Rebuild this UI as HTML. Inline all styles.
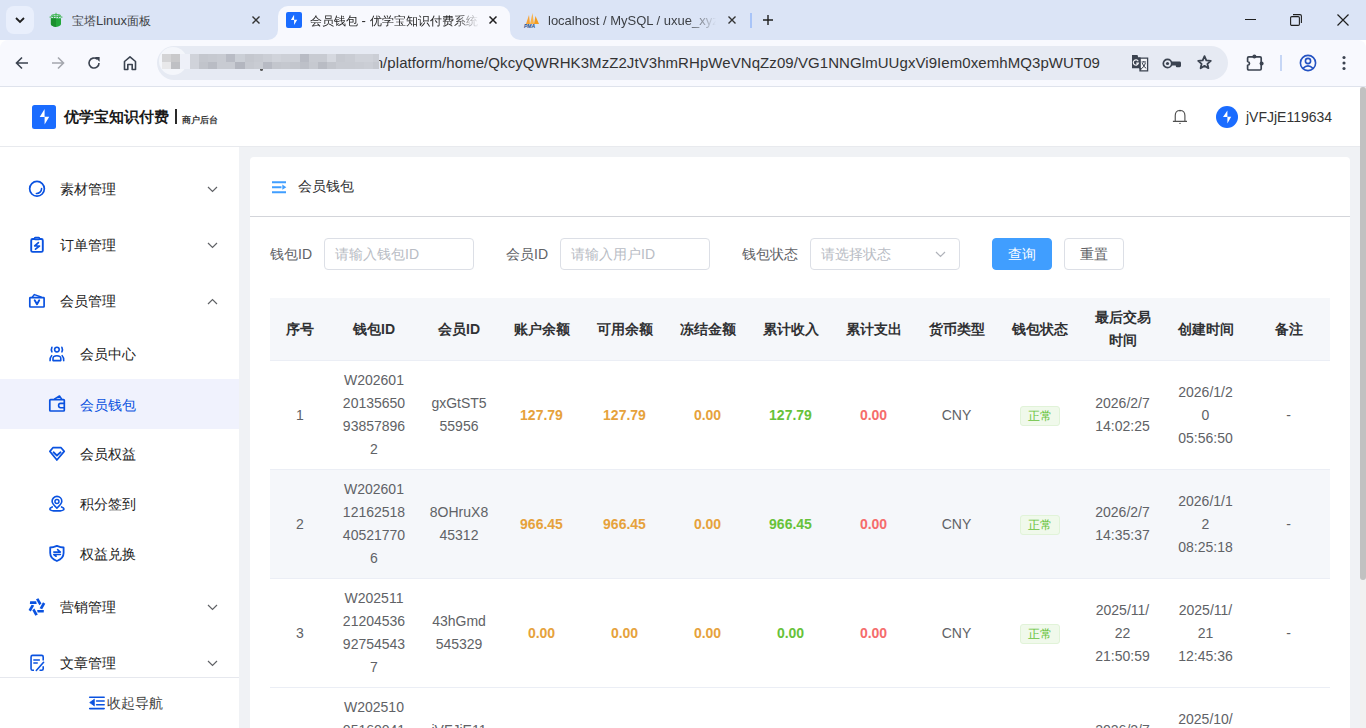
<!DOCTYPE html>
<html><head><meta charset="utf-8">
<style>
*{box-sizing:border-box;margin:0;padding:0}
html,body{width:1366px;height:728px;overflow:hidden;font-family:"Liberation Sans",sans-serif;background:#fff}
.abs{position:absolute}
#tabs{position:absolute;left:0;top:0;width:1366px;height:40px;background:#dbe4f6}
.cj{font-size:12px}
.tabt{font-size:13px;line-height:16px;white-space:nowrap;overflow:hidden}
#toolbar{position:absolute;left:0;top:40px;width:1366px;height:47px;background:#f8f9fe;border-bottom:1px solid #dfe3ec;border-radius:8px 8px 0 0}
#page{position:absolute;left:0;top:87px;width:1366px;height:641px;background:#f0f2f5;overflow:hidden}
#hdr{position:absolute;left:0;top:0;width:1360px;height:60px;background:#fff;border-bottom:1px solid #e8eaee}
#side{position:absolute;left:0;top:60px;width:239px;height:581px;background:#fff;overflow:hidden}
.mi{font-size:14px;line-height:18px;color:#222;white-space:nowrap}
#sb{position:absolute;left:1360px;top:0;width:6px;height:641px;background:#f1f1f1}
#thumb{position:absolute;left:0;top:0;width:6px;height:493px;background:#c1c1c1;border-radius:3px}
#card{position:absolute;left:250px;top:70px;width:1100px;height:620px;background:#fff;border-radius:4px}
.lbl{font-size:14px;line-height:18px;color:#606266;white-space:nowrap}
.inp{width:150px;height:32px;border:1px solid #dcdfe6;border-radius:4px;background:#fff;font-size:14px;color:#b8bcc4;padding-left:10px;line-height:30px;white-space:nowrap}
.btn{width:60px;height:32px;border:1px solid;border-radius:4px;font-size:14px;line-height:30px;text-align:center}
.tr{position:absolute;left:20px;width:1060px;border-bottom:1px solid #ebeef5}
.th{background:#f5f7fa}
.td,.thc{position:absolute;top:0;height:100%;display:flex;align-items:center;justify-content:center;text-align:center;font-size:14px;line-height:23px;color:#606266}
.thc{font-weight:bold;color:#303133}
.tag{position:relative;top:1px;display:inline-block;width:40px;height:20px;line-height:18px;font-size:12px;color:#67c23a;background:#f0f9eb;border:1px solid #e1f3d8;border-radius:3px}
</style></head><body>
<div id="tabs">
  <div class="abs" style="left:6px;top:6px;width:28px;height:28px;border-radius:8px;background:#e9effc"></div>
  <svg class="abs" style="left:14px;top:14px" width="12" height="12" viewBox="0 0 12 12"><path d="M2 4 L6 8 L10 4" fill="none" stroke="#1f1f1f" stroke-width="1.8"/></svg>
  <!-- tab1 -->
  <svg class="abs" style="left:48px;top:12px" width="16" height="16" viewBox="0 0 16 16"><path d="M2.9 6.3 H13 V12 Q13 14 8 14.9 Q2.9 14 2.9 12 Z" fill="#22a73a"/><path d="M2.9 6.3 H8 V14.9 Q2.9 14 2.9 12 Z" fill="#1b8f2e"/><path d="M1.6 5.3 Q8 3.2 14.4 5.3" fill="none" stroke="#3cb350" stroke-width="1.2"/><path d="M3.2 3.4 Q8 1.6 12.8 3.4" fill="none" stroke="#45b858" stroke-width="1.1"/><path d="M8 0.8 V6 M5 2.6 L5.6 6 M11 2.6 L10.4 6" stroke="#3cb350" stroke-width="0.9"/></svg>
  <div class="abs tabt" style="left:72px;top:13px;color:#3c3f44"><span class="cj">宝塔</span>Linux<span class="cj">面板</span></div>
  <svg class="abs" style="left:252px;top:16px" width="8" height="8" viewBox="0 0 8 8"><path d="M0.5 0.5 L7.5 7.5 M7.5 0.5 L0.5 7.5" stroke="#333" stroke-width="1.4"/></svg>
  <!-- active tab -->
  <div class="abs" style="left:278px;top:6px;width:232px;height:34px;background:#f8f9fe;border-radius:10px 10px 0 0"></div>
  <div class="abs" style="left:268px;top:30px;width:10px;height:10px;background:#f8f9fe"></div>
  <div class="abs" style="left:268px;top:30px;width:10px;height:10px;background:#dbe4f6;border-radius:0 0 10px 0"></div>
  <div class="abs" style="left:510px;top:30px;width:10px;height:10px;background:#f8f9fe"></div>
  <div class="abs" style="left:510px;top:30px;width:10px;height:10px;background:#dbe4f6;border-radius:0 0 0 10px"></div>
  <div class="abs" style="left:286px;top:12px;width:16px;height:16px;background:#1a6cff;border-radius:2px"></div>
  <svg class="abs" style="left:286px;top:12px" width="16" height="16" viewBox="0 0 16 16"><path d="M8.1 2.8 L4.9 7.9 H8.1 Z M8.1 7.8 H11.2 L8.1 12.9 Z" fill="#fff"/></svg>
  <div class="abs tabt" style="left:310px;top:13px;width:170px;color:#1f1f1f;-webkit-mask-image:linear-gradient(90deg,#000 145px,transparent 170px)"><span class="cj">会员钱包</span> - <span class="cj">优学宝知识付费系统</span></div>
  <svg class="abs" style="left:489px;top:16px" width="8" height="8" viewBox="0 0 8 8"><path d="M0.5 0.5 L7.5 7.5 M7.5 0.5 L0.5 7.5" stroke="#1f1f1f" stroke-width="1.5"/></svg>
  <!-- tab3 -->
  <svg class="abs" style="left:523px;top:12px" width="18" height="16" viewBox="0 0 18 16">
    <path d="M3 12 L6 3 L7 12 Z" fill="#f7a233"/><path d="M7 12 L9.5 1 L11 12 Z" fill="#f9b24a"/><path d="M11 12 L12.5 4 L16 12 Z" fill="#f39c1f"/>
    <text x="1" y="15.5" font-size="5" font-weight="bold" font-style="italic" fill="#234a8a" font-family="Liberation Sans">PMA</text>
  </svg>
  <div class="abs tabt" style="left:548px;top:13px;width:170px;color:#3c3f44;-webkit-mask-image:linear-gradient(90deg,#000 140px,transparent 168px)">localhost / MySQL / uxue_xyz</div>
  <svg class="abs" style="left:728px;top:16px" width="8" height="8" viewBox="0 0 8 8"><path d="M0.5 0.5 L7.5 7.5 M7.5 0.5 L0.5 7.5" stroke="#333" stroke-width="1.4"/></svg>
  <div class="abs" style="left:750px;top:13px;width:2px;height:15px;background:#a8c4f8"></div>
  <svg class="abs" style="left:762px;top:14px" width="12" height="12" viewBox="0 0 12 12"><path d="M6 1 V11 M1 6 H11" stroke="#1f1f1f" stroke-width="1.4"/></svg>
  <!-- window controls -->
  <div class="abs" style="left:1245px;top:19px;width:11px;height:1.2px;background:#1f1f1f"></div>
  <svg class="abs" style="left:1290px;top:14px" width="12" height="12" viewBox="0 0 12 12"><rect x="0.6" y="2.6" width="8.8" height="8.8" rx="1.2" fill="none" stroke="#1f1f1f" stroke-width="1.1"/><path d="M3 0.6 H10 Q11.4 0.6 11.4 2 V9" fill="none" stroke="#1f1f1f" stroke-width="1.1"/></svg>
  <svg class="abs" style="left:1337px;top:14px" width="12" height="12" viewBox="0 0 12 12"><path d="M0.5 0.5 L11.5 11.5 M11.5 0.5 L0.5 11.5" stroke="#1f1f1f" stroke-width="1.2"/></svg>
</div>
<div id="toolbar">
  <svg class="abs" style="left:15px;top:16px" width="14" height="14" viewBox="0 0 14 14"><path d="M13 7 H1.8 M7 1.5 L1.5 7 L7 12.5" fill="none" stroke="#3b4350" stroke-width="1.6"/></svg>
  <svg class="abs" style="left:51px;top:16px" width="14" height="14" viewBox="0 0 14 14"><path d="M1 7 H12.2 M7 1.5 L12.5 7 L7 12.5" fill="none" stroke="#a4a7ae" stroke-width="1.6"/></svg>
  <svg class="abs" style="left:87px;top:16px" width="14" height="14" viewBox="0 0 14 14"><path d="M12 7 A5 5 0 1 1 10.2 3.2" fill="none" stroke="#3b4350" stroke-width="1.6"/><path d="M7.8 1 L12.6 1 L12.6 5.8 Z" fill="#3b4350"/></svg>
  <svg class="abs" style="left:122px;top:15px" width="16" height="16" viewBox="0 0 16 16"><path d="M2.5 14.5 V6.5 L8 1.8 L13.5 6.5 V14.5 H10.2 V9.5 H5.8 V14.5 Z" fill="none" stroke="#3b4350" stroke-width="1.6" stroke-linejoin="round"/></svg>
  <div class="abs" style="left:157px;top:6px;width:1071px;height:34px;border-radius:17px;background:#e6eaf3"></div>
  
  <div class="abs" style="left:374.7px;top:14px;font-size:15px;color:#333;letter-spacing:0.07px;white-space:nowrap">n/platform/home/QkcyQWRHK3MzZ2JtV3hmRHpWeVNqZz09/VG1NNGlmUUgxVi9Iem0xemhMQ3pWUT09</div>
  <div id="blur" class="abs" style="left:160px;top:14px;width:225px;height:16px"><div class="abs" style="left:-1px;top:-7px;width:28px;height:28px;border-radius:50%;background:#f4f6fb"></div><div class="abs" style="left:2.00px;top:0px;width:9.67px;height:8px;background:#d4d4d6"></div><div class="abs" style="left:11.17px;top:0px;width:9.67px;height:8px;background:#c9c9cb"></div><div class="abs" style="left:20.34px;top:0px;width:9.67px;height:8px;background:#eef0f8"></div><div class="abs" style="left:29.51px;top:0px;width:9.67px;height:8px;background:#d0d3da"></div><div class="abs" style="left:38.68px;top:0px;width:9.67px;height:8px;background:#c4c7ce"></div><div class="abs" style="left:47.85px;top:0px;width:9.67px;height:8px;background:#c6c9d0"></div><div class="abs" style="left:57.02px;top:0px;width:9.67px;height:8px;background:#c8cbd2"></div><div class="abs" style="left:66.19px;top:0px;width:9.67px;height:8px;background:#b9bcc5"></div><div class="abs" style="left:75.36px;top:0px;width:9.67px;height:8px;background:#cbcfd6"></div><div class="abs" style="left:84.53px;top:0px;width:9.67px;height:8px;background:#c4c7ce"></div><div class="abs" style="left:93.70px;top:0px;width:9.67px;height:8px;background:#c7cad1"></div><div class="abs" style="left:102.87px;top:0px;width:9.67px;height:8px;background:#cbced5"></div><div class="abs" style="left:112.04px;top:0px;width:9.67px;height:8px;background:#d0d3da"></div><div class="abs" style="left:121.21px;top:0px;width:9.67px;height:8px;background:#cdd0d7"></div><div class="abs" style="left:130.38px;top:0px;width:9.67px;height:8px;background:#cdd0d7"></div><div class="abs" style="left:139.55px;top:0px;width:9.67px;height:8px;background:#b8bbc4"></div><div class="abs" style="left:148.72px;top:0px;width:9.67px;height:8px;background:#c8cbd2"></div><div class="abs" style="left:157.89px;top:0px;width:9.67px;height:8px;background:#c8cbd2"></div><div class="abs" style="left:167.06px;top:0px;width:9.67px;height:8px;background:#d5d8df"></div><div class="abs" style="left:176.23px;top:0px;width:9.67px;height:8px;background:#c6c9d0"></div><div class="abs" style="left:185.40px;top:0px;width:9.67px;height:8px;background:#c9ccd3"></div><div class="abs" style="left:194.57px;top:0px;width:9.67px;height:8px;background:#cfd2d9"></div><div class="abs" style="left:203.74px;top:0px;width:9.67px;height:8px;background:#cfd2d9"></div><div class="abs" style="left:212.91px;top:0px;width:6.00px;height:8px;background:#cbced5"></div><div class="abs" style="left:2.00px;top:8px;width:9.67px;height:7px;background:#e8e8ea"></div><div class="abs" style="left:11.17px;top:8px;width:9.67px;height:7px;background:#bfc0c4"></div><div class="abs" style="left:20.34px;top:8px;width:9.67px;height:7px;background:#eef0f8"></div><div class="abs" style="left:29.51px;top:8px;width:9.67px;height:7px;background:#d0d3da"></div><div class="abs" style="left:38.68px;top:8px;width:9.67px;height:7px;background:#c1c4cb"></div><div class="abs" style="left:47.85px;top:8px;width:9.67px;height:7px;background:#b9bcc4"></div><div class="abs" style="left:57.02px;top:8px;width:9.67px;height:7px;background:#c8cbd2"></div><div class="abs" style="left:66.19px;top:8px;width:9.67px;height:7px;background:#c8cbd2"></div><div class="abs" style="left:75.36px;top:8px;width:9.67px;height:7px;background:#b3b6bf"></div><div class="abs" style="left:84.53px;top:8px;width:9.67px;height:7px;background:#c6c9d0"></div><div class="abs" style="left:93.70px;top:8px;width:9.67px;height:7px;background:#c9ccd3"></div><div class="abs" style="left:102.87px;top:8px;width:9.67px;height:7px;background:#b7bac3"></div><div class="abs" style="left:112.04px;top:8px;width:9.67px;height:7px;background:#c3c6cd"></div><div class="abs" style="left:121.21px;top:8px;width:9.67px;height:7px;background:#c5c8cf"></div><div class="abs" style="left:130.38px;top:8px;width:9.67px;height:7px;background:#c3c6cd"></div><div class="abs" style="left:139.55px;top:8px;width:9.67px;height:7px;background:#bdc0c8"></div><div class="abs" style="left:148.72px;top:8px;width:9.67px;height:7px;background:#c6c9d0"></div><div class="abs" style="left:157.89px;top:8px;width:9.67px;height:7px;background:#b9bcc4"></div><div class="abs" style="left:167.06px;top:8px;width:9.67px;height:7px;background:#c3c6cd"></div><div class="abs" style="left:176.23px;top:8px;width:9.67px;height:7px;background:#c8cbd2"></div><div class="abs" style="left:185.40px;top:8px;width:9.67px;height:7px;background:#c8cbd2"></div><div class="abs" style="left:194.57px;top:8px;width:9.67px;height:7px;background:#c9ccd3"></div><div class="abs" style="left:203.74px;top:8px;width:9.67px;height:7px;background:#cbced5"></div><div class="abs" style="left:212.91px;top:8px;width:6.00px;height:7px;background:#c6c9d0"></div><div class="abs" style="left:100px;top:15px;width:3px;height:2px;background:#555;border-radius:0 0 2px 2px"></div></div>
  <!-- translate icon -->
  <svg class="abs" style="left:1131px;top:14px" width="19" height="19" viewBox="0 0 19 19"><path d="M9 4.2 H16.6 V16.8 H9 Z" fill="#f4f5f8" stroke="#3b4350" stroke-width="1.3"/><path d="M1 1 H6.5 L7.2 3.2 H9.5 V14.2 H1 Z" fill="#3b4350"/><path d="M8.3 14 L9.6 17 L11 14 Z" fill="#3b4350"/><path d="M7.2 7.3 A2.6 2.6 0 1 0 7.4 9.2 H5.2" fill="none" stroke="#f4f5f8" stroke-width="1.2"/><path d="M10.6 8 H15 M12.8 7 V8 M11.2 9 Q12.6 13 15.2 14.3 M14.4 9 Q13.4 13 10.8 14.3" fill="none" stroke="#3b4350" stroke-width="1"/></svg>
  <svg class="abs" style="left:1162px;top:18px" width="20" height="11" viewBox="0 0 20 11"><circle cx="5.5" cy="5.5" r="4.2" fill="none" stroke="#3b4350" stroke-width="1.7"/><circle cx="5.5" cy="5.5" r="1.6" fill="#3b4350"/><path d="M9.5 3.6 H17.6 Q19 3.6 19 5 V7.8 Q19 9.2 17.6 9.2 H15 Q13.8 9.2 13.8 8 V7.4 H9.5 Z" fill="#3b4350"/></svg>
  <svg class="abs" style="left:1196px;top:14px" width="17" height="17" viewBox="0 0 17 17"><path d="M8.5 2.2 L10.3 6.4 L14.8 6.8 L11.4 9.8 L12.4 14.2 L8.5 11.9 L4.6 14.2 L5.6 9.8 L2.2 6.8 L6.7 6.4 Z" fill="none" stroke="#3b4350" stroke-width="1.8" stroke-linejoin="round"/></svg>
  <svg class="abs" style="left:1245px;top:13px" width="20" height="19" viewBox="0 0 20 19"><path d="M3.8 3.8 H15 Q16.2 3.8 16.2 5 V15.8 Q16.2 17 15 17 H3.8 Q2.6 17 2.6 15.8 V12.3 Q4.5 11.8 4.5 10.4 Q4.5 9 2.6 8.5 V5 Q2.6 3.8 3.8 3.8 Z" fill="none" stroke="#3b4350" stroke-width="1.7" stroke-linejoin="round"/><circle cx="9.4" cy="3.4" r="2" fill="#3b4350"/><circle cx="16.6" cy="10.4" r="2" fill="#3b4350"/></svg>
  <div class="abs" style="left:1280px;top:15px;width:2px;height:16px;background:#c6d6f5"></div>
  <svg class="abs" style="left:1299px;top:14px" width="18" height="18" viewBox="0 0 18 18"><circle cx="9" cy="9" r="7.6" fill="none" stroke="#2352c2" stroke-width="1.6"/><circle cx="9" cy="7" r="2.6" fill="none" stroke="#2352c2" stroke-width="1.6"/><path d="M4 14.3 Q9 9.5 14 14.3" fill="none" stroke="#2352c2" stroke-width="1.6"/></svg>
  <svg class="abs" style="left:1340px;top:13px" width="8" height="20" viewBox="0 0 8 20"><circle cx="4" cy="4.5" r="1.55" fill="#3b4350"/><circle cx="4" cy="10" r="1.55" fill="#3b4350"/><circle cx="4" cy="15.5" r="1.55" fill="#3b4350"/></svg>
</div>
<div id="page">
  <div id="hdr">
    <div class="abs" style="left:32.4px;top:18px;width:23.6px;height:23.8px;background:#1a6cff;border-radius:2.5px"></div>
    <svg class="abs" style="left:32px;top:18px" width="24" height="24" viewBox="0 0 24 24"><path d="M12.6 4.1 L7.7 11.9 H12.6 Z M12.6 11.7 H17.25 L12.6 19.5 Z" fill="#fff"/></svg>
    <div class="abs" style="left:64px;top:21px;font-size:15px;font-weight:bold;color:#1a1a1a;line-height:18px;white-space:nowrap">优学宝知识付费</div>
    <div class="abs" style="left:175px;top:22px;width:1.6px;height:15px;background:#2a2a2a"></div>
    <div class="abs" style="left:182px;top:28px;font-size:8.7px;font-weight:bold;color:#333;line-height:10px;white-space:nowrap">商户后台</div>
    <svg class="abs" style="left:1172px;top:20px" width="16" height="18" viewBox="0 0 16 18"><path d="M0.9 14.4 H15 M3.25 14.4 V8.5 Q3.25 3.5 8 3.5 Q12.9 3.5 12.9 8.5 V14.4" fill="none" stroke="#505050" stroke-width="1.15"/><circle cx="8" cy="3.6" r="0.9" fill="#505050"/><path d="M7.2 16.4 H8.8" stroke="#505050" stroke-width="0.9"/></svg>
    <div class="abs" style="left:1216px;top:19px;width:22px;height:22px;border-radius:50%;background:#1a6cff"></div>
    <svg class="abs" style="left:1216px;top:19px" width="22" height="22" viewBox="0 0 22 22"><path d="M11.4 4.5 L7 10.9 H11.4 Z M11.4 10.8 H15.2 L11.4 17.4 Z" fill="#fff"/></svg>
    <div class="abs" style="left:1246px;top:21px;font-size:14px;color:#333;line-height:18px">jVFJjE119634</div>
  </div>
  <div id="side">
<svg class="abs" style="left:28px;top:33px" width="18" height="18" viewBox="0 0 18 18" fill="none" stroke="#0a52e0" stroke-width="1.7" stroke-linecap="round" stroke-linejoin="round"><circle cx="9" cy="8.8" r="7.35"/><path d="M13.6 8.6 A4.9 4.9 0 0 1 8.4 13.5" stroke-width="1.6"/></svg><div class="abs mi" style="left:60px;top:33px">素材管理</div><svg class="abs" style="left:207px;top:39px" width="11" height="7" viewBox="0 0 11 7"><path d="M1 1 L5.5 5.5 L10 1" fill="none" stroke="#606266" stroke-width="1.2"/></svg>
<svg class="abs" style="left:29px;top:88px" width="16" height="19" viewBox="0 0 16 19" fill="none" stroke="#0a52e0" stroke-width="1.7" stroke-linecap="round" stroke-linejoin="round"><rect x="2.2" y="4" width="11.6" height="12.9" rx="1.5" stroke-width="1.9"/><rect x="5.5" y="2.6" width="5" height="1.9" rx="0.8" fill="#fff" stroke-width="1.6"/><path d="M9.4 7.6 L5.7 11 L10.5 11 L6.5 14.2"/></svg><div class="abs mi" style="left:60px;top:89px">订单管理</div><svg class="abs" style="left:207px;top:95px" width="11" height="7" viewBox="0 0 11 7"><path d="M1 1 L5.5 5.5 L10 1" fill="none" stroke="#606266" stroke-width="1.2"/></svg>
<svg class="abs" style="left:28px;top:145px" width="18" height="18" viewBox="0 0 18 18" fill="none" stroke="#0a52e0" stroke-width="1.7" stroke-linecap="round" stroke-linejoin="round"><rect x="1.8" y="5.7" width="14.3" height="9.3" rx="0.6"/><path d="M4.2 5.2 L6.4 2.6 L13.1 5" stroke-width="1.5"/><path d="M6.7 8.3 L9 12.2 L11.2 8.3" stroke-width="1.9"/></svg><div class="abs mi" style="left:60px;top:145px">会员管理</div><svg class="abs" style="left:207px;top:151px" width="11" height="7" viewBox="0 0 11 7"><path d="M1 6 L5.5 1.5 L10 6" fill="none" stroke="#606266" stroke-width="1.2"/></svg>
<svg class="abs" style="left:48px;top:197px" width="18" height="18" viewBox="0 0 18 18" fill="none" stroke="#0a52e0" stroke-width="1.7" stroke-linecap="round" stroke-linejoin="round"><circle cx="8.9" cy="5.6" r="2.3" stroke-width="1.6"/><path d="M3.9 3.3 Q2.8 5.6 3.9 7.9 M13.9 3.3 Q15 5.6 13.9 7.9" stroke-width="1.6"/><path d="M5 16.6 V14.5 Q5 11.8 8.9 11.8 Q12.8 11.8 12.8 14.5 V16.6 Z" stroke-width="1.6"/><path d="M3.6 11.7 Q1.9 13.5 2.1 16.6 M14.2 11.7 Q15.9 13.5 15.7 16.6" stroke-width="1.6"/></svg><div class="abs mi" style="left:80px;top:198px">会员中心</div>
<div class="abs" style="left:0;top:232px;width:239px;height:50px;background:#f0f2fd"></div>
<svg class="abs" style="left:48px;top:247px" width="18" height="18" viewBox="0 0 18 18" fill="none" stroke="#0a52e0" stroke-width="1.7" stroke-linecap="round" stroke-linejoin="round"><rect x="1.8" y="5.55" width="14.5" height="11.45" rx="0.8"/><path d="M6.7 4.9 L11.5 2 L13.5 4.9" stroke-width="1.6"/><path d="M16.3 9.4 H12.6 Q10.6 9.4 10.6 11.55 Q10.6 13.7 12.6 13.7 H16.3" stroke-width="1.6"/></svg><div class="abs mi" style="left:80px;top:248.5px;color:#0a52e0">会员钱包</div>
<svg class="abs" style="left:48px;top:296px" width="18" height="18" viewBox="0 0 18 18" fill="none" stroke="#0a52e0" stroke-width="1.7" stroke-linecap="round" stroke-linejoin="round"><path d="M4.9 4.7 H13.1 L16.2 8.4 L8.9 17 L1.9 8.4 Z"/><path d="M5.5 9.25 L8.9 12.5 L12.6 9.25" stroke-width="1.8"/></svg><div class="abs mi" style="left:80px;top:298px">会员权益</div>
<svg class="abs" style="left:48px;top:346px" width="18" height="19" viewBox="0 0 18 19" fill="none" stroke="#0a52e0" stroke-width="1.7" stroke-linecap="round" stroke-linejoin="round"><path d="M8.9 15.1 Q4.1 10.8 4.1 8.25 A4.85 4.85 0 0 1 13.8 8.25 Q13.8 10.8 8.9 15.1 Z" stroke-width="1.6"/><circle cx="8.95" cy="8.4" r="2" stroke-width="1.5"/><path d="M4.2 13.9 Q1.8 14.8 1.8 15.9 Q1.8 17.9 8.9 17.9 Q16 17.9 16 15.9 Q16 14.8 13.6 13.9" stroke-width="1.6"/></svg><div class="abs mi" style="left:80px;top:348px">积分签到</div>
<svg class="abs" style="left:48px;top:396px" width="18" height="20" viewBox="0 0 18 20" fill="none" stroke="#0a52e0" stroke-width="1.7" stroke-linecap="round" stroke-linejoin="round"><path d="M8.9 2.8 Q5 4.5 2.2 4.5 V10 Q2.2 15.5 8.9 18 Q15.6 15.5 15.6 10 V4.5 Q12.8 4.5 8.9 2.8 Z" stroke-width="1.8"/><path d="M5.8 9.1 H12.4 L9.6 6.6 M12.4 11.5 H5.8 L8.1 13.25" stroke-width="1.6"/></svg><div class="abs mi" style="left:80px;top:398px">权益兑换</div>
<svg class="abs" style="left:28px;top:451px" width="18" height="18" viewBox="0 0 18 18"><polygon points="2.1,3.2 8.2,3.2 8.7,5.9 1.9,5.9" transform="rotate(0 8.9 8.9)" fill="#0a52e0"/><polygon points="2.1,3.2 8.2,3.2 8.7,5.9 1.9,5.9" transform="rotate(60 8.9 8.9)" fill="#0a52e0"/><polygon points="2.1,3.2 8.2,3.2 8.7,5.9 1.9,5.9" transform="rotate(120 8.9 8.9)" fill="#0a52e0"/><polygon points="2.1,3.2 8.2,3.2 8.7,5.9 1.9,5.9" transform="rotate(180 8.9 8.9)" fill="#0a52e0"/><polygon points="2.1,3.2 8.2,3.2 8.7,5.9 1.9,5.9" transform="rotate(240 8.9 8.9)" fill="#0a52e0"/><polygon points="2.1,3.2 8.2,3.2 8.7,5.9 1.9,5.9" transform="rotate(300 8.9 8.9)" fill="#0a52e0"/></svg><div class="abs mi" style="left:60px;top:451px">营销管理</div><svg class="abs" style="left:207px;top:457px" width="11" height="7" viewBox="0 0 11 7"><path d="M1 1 L5.5 5.5 L10 1" fill="none" stroke="#606266" stroke-width="1.2"/></svg>
<svg class="abs" style="left:28px;top:505px" width="18" height="20" viewBox="0 0 18 20" fill="none" stroke="#0a52e0" stroke-width="1.7" stroke-linecap="round" stroke-linejoin="round"><path d="M6 18.2 H4.5 Q3.05 18.2 3.05 16.7 V4.9 Q3.05 3.4 4.5 3.4 H13.7 Q15.2 3.4 15.2 4.9 V8.4 M15.2 14.25 V16.7 Q15.2 18.2 13.7 18.2 H11.5" stroke-width="1.6" stroke-linecap="butt"/><path d="M5.3 8 H11.9 M5.3 11 H9.75" stroke-width="1.6" stroke-linecap="butt"/><path d="M8.3 18.5 L15.6 10.3" stroke-width="1.6"/></svg><div class="abs mi" style="left:60px;top:507px">文章管理</div><svg class="abs" style="left:207px;top:513px" width="11" height="7" viewBox="0 0 11 7"><path d="M1 1 L5.5 5.5 L10 1" fill="none" stroke="#606266" stroke-width="1.2"/></svg>
<div class="abs" style="left:0;top:530px;width:239px;height:51px;background:#fff;border-top:1px solid #e6e8ee"></div>
<svg class="abs" style="left:88px;top:548px" width="18" height="16" viewBox="0 0 18 16" fill="none" stroke="#0a52e0" stroke-width="1.7" stroke-linecap="round" stroke-linejoin="round"><path d="M1.7 2.2 H16.15 M8.6 6 H16.15 M8.6 9.8 H16.15 M1.7 13.6 H16.15" stroke-width="1.6"/><path d="M6.1 4.4 L1.7 7.55 L6.1 10.7 Z" fill="#0a52e0" stroke-width="0.8"/></svg><div class="abs mi" style="left:107px;top:547px;color:#444">收起导航</div>
</div>
  <div id="card">
    <svg class="abs" style="left:22px;top:24px" width="15" height="13" viewBox="0 0 15 13"><path d="M0 1.2 H14 M0 6.2 H9.5 M0 11.2 H14" stroke="#409eff" stroke-width="1.9"/><path d="M10.3 3.6 L14.3 6.2 L10.3 8.8 Z" fill="#409eff"/></svg>
    <div class="abs" style="left:48px;top:20px;font-size:14px;color:#303133;line-height:18px">会员钱包</div>
    <div class="abs" style="left:0;top:59px;width:1100px;height:1px;background:#d3d5da"></div>
    <div class="abs lbl" style="left:20px;top:88px">钱包ID</div>
    <div class="abs inp" style="left:74px;top:81px"><span>请输入钱包ID</span></div>
    <div class="abs lbl" style="left:256px;top:88px">会员ID</div>
    <div class="abs inp" style="left:310px;top:81px"><span>请输入用户ID</span></div>
    <div class="abs lbl" style="left:492px;top:88px">钱包状态</div>
    <div class="abs inp" style="left:560px;top:81px"><span>请选择状态</span></div>
    <svg class="abs" style="left:685px;top:94px" width="11" height="7" viewBox="0 0 11 7"><path d="M1 1 L5.5 5.5 L10 1" fill="none" stroke="#b0b3ba" stroke-width="1.2"/></svg>
    <div class="abs btn" style="left:742px;top:81px;background:#409eff;border-color:#409eff;color:#fff">查询</div>
    <div class="abs btn" style="left:814px;top:81px;background:#fff;border-color:#dcdfe6;color:#606266">重置</div>
<div class="tr th" style="top:141px;height:63px"><div class="thc" style="left:0px;width:60px"><span>序号</span></div><div class="thc" style="left:60px;width:88px"><span>钱包ID</span></div><div class="thc" style="left:148px;width:82px"><span>会员ID</span></div><div class="thc" style="left:230px;width:83px"><span>账户余额</span></div><div class="thc" style="left:313px;width:83px"><span>可用余额</span></div><div class="thc" style="left:396px;width:83px"><span>冻结金额</span></div><div class="thc" style="left:479px;width:83px"><span>累计收入</span></div><div class="thc" style="left:562px;width:83px"><span>累计支出</span></div><div class="thc" style="left:645px;width:83px"><span>货币类型</span></div><div class="thc" style="left:728px;width:83px"><span>钱包状态</span></div><div class="thc" style="left:811px;width:83px"><span>最后交易<br>时间</span></div><div class="thc" style="left:894px;width:83px"><span>创建时间</span></div><div class="thc" style="left:977px;width:83px"><span>备注</span></div></div>
<div class="tr" style="top:204px;height:109px;background:#fff"><div class="td" style="left:0px;width:60px"><span>1</span></div><div class="td" style="left:60px;width:88px"><span>W202601<br>20135650<br>93857896<br>2</span></div><div class="td" style="left:148px;width:82px"><span>gxGtST5<br>55956</span></div><div class="td" style="left:230px;width:83px"><span style="color:#e6a23c;font-weight:bold">127.79</span></div><div class="td" style="left:313px;width:83px"><span style="color:#e6a23c;font-weight:bold">127.79</span></div><div class="td" style="left:396px;width:83px"><span style="color:#e6a23c;font-weight:bold">0.00</span></div><div class="td" style="left:479px;width:83px"><span style="color:#67c23a;font-weight:bold">127.79</span></div><div class="td" style="left:562px;width:83px"><span style="color:#f56c6c;font-weight:bold">0.00</span></div><div class="td" style="left:645px;width:83px"><span>CNY</span></div><div class="td" style="left:728px;width:83px"><span class="tag">正常</span></div><div class="td" style="left:811px;width:83px"><span>2026/2/7<br>14:02:25</span></div><div class="td" style="left:894px;width:83px"><span>2026/1/2<br>0<br>05:56:50</span></div><div class="td" style="left:977px;width:83px"><span>-</span></div></div>
<div class="tr" style="top:313px;height:109px;background:#f5f7fa"><div class="td" style="left:0px;width:60px"><span>2</span></div><div class="td" style="left:60px;width:88px"><span>W202601<br>12162518<br>40521770<br>6</span></div><div class="td" style="left:148px;width:82px"><span>8OHruX8<br>45312</span></div><div class="td" style="left:230px;width:83px"><span style="color:#e6a23c;font-weight:bold">966.45</span></div><div class="td" style="left:313px;width:83px"><span style="color:#e6a23c;font-weight:bold">966.45</span></div><div class="td" style="left:396px;width:83px"><span style="color:#e6a23c;font-weight:bold">0.00</span></div><div class="td" style="left:479px;width:83px"><span style="color:#67c23a;font-weight:bold">966.45</span></div><div class="td" style="left:562px;width:83px"><span style="color:#f56c6c;font-weight:bold">0.00</span></div><div class="td" style="left:645px;width:83px"><span>CNY</span></div><div class="td" style="left:728px;width:83px"><span class="tag">正常</span></div><div class="td" style="left:811px;width:83px"><span>2026/2/7<br>14:35:37</span></div><div class="td" style="left:894px;width:83px"><span>2026/1/1<br>2<br>08:25:18</span></div><div class="td" style="left:977px;width:83px"><span>-</span></div></div>
<div class="tr" style="top:422px;height:109px;background:#fff"><div class="td" style="left:0px;width:60px"><span>3</span></div><div class="td" style="left:60px;width:88px"><span>W202511<br>21204536<br>92754543<br>7</span></div><div class="td" style="left:148px;width:82px"><span>43hGmd<br>545329</span></div><div class="td" style="left:230px;width:83px"><span style="color:#e6a23c;font-weight:bold">0.00</span></div><div class="td" style="left:313px;width:83px"><span style="color:#e6a23c;font-weight:bold">0.00</span></div><div class="td" style="left:396px;width:83px"><span style="color:#e6a23c;font-weight:bold">0.00</span></div><div class="td" style="left:479px;width:83px"><span style="color:#67c23a;font-weight:bold">0.00</span></div><div class="td" style="left:562px;width:83px"><span style="color:#f56c6c;font-weight:bold">0.00</span></div><div class="td" style="left:645px;width:83px"><span>CNY</span></div><div class="td" style="left:728px;width:83px"><span class="tag">正常</span></div><div class="td" style="left:811px;width:83px"><span>2025/11/<br>22<br>21:50:59</span></div><div class="td" style="left:894px;width:83px"><span>2025/11/<br>21<br>12:45:36</span></div><div class="td" style="left:977px;width:83px"><span>-</span></div></div>
<div class="tr" style="top:531px;height:109px;background:#fff"><div class="td" style="left:0px;width:60px"><span>4</span></div><div class="td" style="left:60px;width:88px"><span>W202510<br>05160041<br>00000000<br>0</span></div><div class="td" style="left:148px;width:82px"><span>jVFJjE11<br>9634</span></div><div class="td" style="left:230px;width:83px"><span style="color:#e6a23c;font-weight:bold">0.00</span></div><div class="td" style="left:313px;width:83px"><span style="color:#e6a23c;font-weight:bold">0.00</span></div><div class="td" style="left:396px;width:83px"><span style="color:#e6a23c;font-weight:bold">0.00</span></div><div class="td" style="left:479px;width:83px"><span style="color:#67c23a;font-weight:bold">0.00</span></div><div class="td" style="left:562px;width:83px"><span style="color:#f56c6c;font-weight:bold">0.00</span></div><div class="td" style="left:645px;width:83px"><span>CNY</span></div><div class="td" style="left:728px;width:83px"><span class="tag">正常</span></div><div class="td" style="left:811px;width:83px"><span>2026/2/7<br>14:00:00</span></div><div class="td" style="left:894px;width:83px"><span>2025/10/<br>05<br>16:00:41</span></div><div class="td" style="left:977px;width:83px"><span>-</span></div></div>
  </div>
  <div id="sb"><div id="thumb"></div></div>
</div>
</body></html>
